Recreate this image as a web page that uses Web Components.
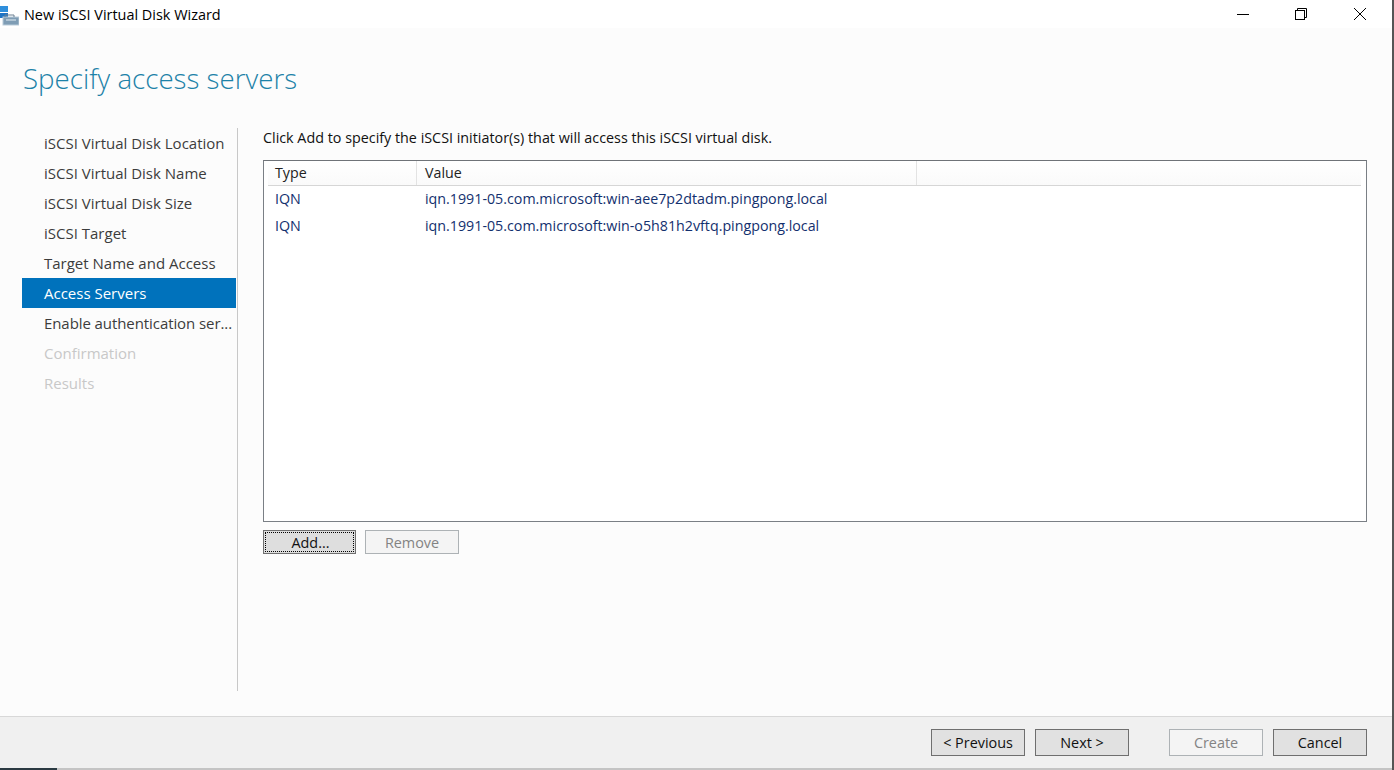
<!DOCTYPE html>
<html>
<head>
<meta charset="utf-8">
<title>New iSCSI Virtual Disk Wizard</title>
<style>
  html, body { margin: 0; height: 100%; overflow: hidden; background: #fcfcfc; }
  body { font-family: "Open Sans", "Liberation Sans", sans-serif; font-size: 14px; }
</style>
</head>
<body>
<wizard-window>
  <wizard-titlebar slot="titlebar">New iSCSI Virtual Disk Wizard</wizard-titlebar>
  <wizard-nav slot="nav"></wizard-nav>
  <server-list slot="main"></server-list>
  <wizard-footer slot="footer"></wizard-footer>
</wizard-window>

<script>
/**
 * Outer frame of the wizard.
 */
customElements.define('wizard-window', class extends HTMLElement {
  constructor () {
    super()
    this.attachShadow({ mode: 'open' }).innerHTML = `
      <style>
        :host { display: flex; flex-direction: column; width: 1394px; height: 770px; box-sizing: border-box; border-right: 2px solid #555; }
        h1 { margin: 0; height: 100px; box-sizing: border-box; padding: 27px 0 0 23px; font-size: 27.7px; line-height: 46px; font-weight: 300; color: #1d82a8; background: #fcfcfc; }
        .body { flex: 1; display: flex; background: #fcfcfc; min-height: 0; }
      </style>
      <slot name="titlebar"></slot>
      <h1>Specify access servers</h1>
      <div class="body">
        <slot name="nav"></slot>
        <slot name="main"></slot>
      </div>
      <slot name="footer"></slot>
    `
  }
})

/**
 * Title bar with app icon and the window controls.
 */
customElements.define('wizard-titlebar', class extends HTMLElement {
  constructor () {
    super()
    this.attachShadow({ mode: 'open' }).innerHTML = `
      <style>
        :host { display: flex; align-items: center; height: 28px; background: #fff; color: #000; font-size: 14.45px; flex: none; padding-right: 3px; }
        .app { width: 19px; height: 24px; margin-right: 5px; flex: none; }
        .title { flex: 1; }
        .ctl { width: 58.5px; height: 28px; display: flex; align-items: center; justify-content: center; }
        .ctl svg { display: block; }
      </style>
      <svg class="app" viewBox="0 0 19 24">
        <rect x="0" y="4" width="8" height="6" fill="#2f8fdc"/>
        <rect x="0" y="11" width="8" height="5" fill="#1f74c4"/>
        <rect x="3" y="15" width="16" height="8" fill="#7f9db5" stroke="#b9cbd9"/>
        <path d="M5 15v-2h9v2" fill="none" stroke="#6b7f90"/>
        <path d="M6 18h10" stroke="#e4edf3"/>
      </svg>
      <span class="title"><slot></slot></span>
      <div class="ctl"><svg width="12" height="12"><path d="M0 6.5h12" stroke="#000"/></svg></div>
      <div class="ctl"><svg width="12" height="12"><rect x=".5" y="2.5" width="9" height="9" fill="none" stroke="#000"/><path d="M2.5 2.5v-2h9v9h-2" fill="none" stroke="#000"/></svg></div>
      <div class="ctl"><svg width="12" height="12"><path d="M0 0l12 12M12 0L0 12" stroke="#000" fill="none"/></svg></div>
    `
  }
})

/**
 * Step list on the left of the wizard.
 */
customElements.define('wizard-nav', class extends HTMLElement {
  constructor () {
    super()
    const steps = [
      ['iSCSI Virtual Disk Location'], ['iSCSI Virtual Disk Name'], ['iSCSI Virtual Disk Size'],
      ['iSCSI Target'], ['Target Name and Access'], ['Access Servers', 'on'],
      ['Enable authentication ser...', 'tight'], ['Confirmation', 'off'], ['Results', 'off']
    ]
    this.attachShadow({ mode: 'open' }).innerHTML = `
      <style>
        :host { display: block; flex: none; width: 215px; height: 563px; margin-left: 22px; border-right: 1px solid #c8c8c8; box-sizing: content-box; }
        div { height: 30px; line-height: 30px; padding-left: 22px; margin-right: 1px; font-size: 15px; color: #3c3c3c; white-space: nowrap; overflow: hidden; }
        div:first-child { margin-top: 1px; }
        .on { background: #0072bc; color: #fff; }
        .off { color: #c8c8c8; }
        .tight { letter-spacing: -.08px; }
      </style>
      ${steps.map(s => `<div class="${s[1] || ''}">${s[0]}</div>`).join('')}
    `
  }
})

/**
 * A grey push button.
 */
customElements.define('wiz-button', class extends HTMLElement {
  constructor () {
    super()
    this.attachShadow({ mode: 'open' }).innerHTML = `
      <style>
        :host { display: flex; align-items: center; justify-content: center; box-sizing: border-box; width: 94px; height: 27px; background: #e1e1e1; border: 1px solid #6f6f6f; color: #111; font-size: 14.4px; position: relative; }
        :host([disabled]) { background: #f4f4f4; border-color: #adb2b5; color: #838383; }
        :host([focused]) { background: #dedede; padding-left: 2px; }
        :host([focused])::after { content: ""; position: absolute; inset: 1px; border: 1px dotted #000; }
      </style>
      <slot></slot>
    `
  }
})

/**
 * Instruction line, the initiator table and the add / remove buttons.
 */
customElements.define('server-list', class extends HTMLElement {
  constructor () {
    super()
    this.attachShadow({ mode: 'open' }).innerHTML = `
      <style>
        :host { display: block; flex: 1; padding: 0 25px; min-width: 0; font-size: 14.25px; }
        p { margin: 0; height: 33px; line-height: 20px; font-size: 14.33px; color: #111; }
        .box { margin-top: -1px; height: 362px; box-sizing: border-box; background: #fff; border: 1px solid #7a7f85; border-top-color: #6f7378; padding: 0 5px 0 4px; }
        .row { display: grid; grid-template-columns: 149px 500px 1fr; }
        .head { height: 25px; line-height: 24px; border-bottom: 1px solid #d6d6d6; color: #222; background: linear-gradient(#fff, #fafafa); box-sizing: border-box; }
        .head span { border-right: 1px solid #e3e3e3; padding-left: 7px; }
        .head span:last-child { border: 0; }
        .rows { margin-top: -1px; }
        .item { height: 27px; line-height: 27px; color: #13306e; }
        .item span { padding-left: 7px; white-space: nowrap; }
        .item span:nth-child(2), .head span:nth-child(2) { padding-left: 8px; }
        .actions { display: flex; gap: 9px; margin-top: 8px; }
        .add { width: 93px; height: 24px; }
        .remove { height: 24px; }
      </style>
      <p>Click Add to specify the iSCSI initiator(s) that will access this iSCSI virtual disk.</p>
      <div class="box">
        <div class="row head"><span>Type</span><span>Value</span><span></span></div>
        <div class="rows">
          <div class="row item"><span>IQN</span><span>iqn.1991-05.com.microsoft:win-aee7p2dtadm.pingpong.local</span></div>
          <div class="row item"><span>IQN</span><span>iqn.1991-05.com.microsoft:win-o5h81h2vftq.pingpong.local</span></div>
        </div>
      </div>
      <div class="actions">
        <wiz-button class="add" focused>Add...</wiz-button>
        <wiz-button class="remove" disabled>Remove</wiz-button>
      </div>
    `
  }
})

/**
 * Footer bar with the wizard navigation buttons.
 */
customElements.define('wizard-footer', class extends HTMLElement {
  constructor () {
    super()
    this.attachShadow({ mode: 'open' }).innerHTML = `
      <style>
        :host { display: flex; flex: none; height: 54px; box-sizing: border-box; background: #f0f0f0; border-top: 1px solid #d8d8d8; padding: 12px 25px 0 0; justify-content: flex-end; gap: 10px; position: relative; }
        .gap { margin-left: 30px; }
        .edge { position: absolute; left: 0; right: 0; bottom: 0; height: 2px; background: linear-gradient(90deg, #2b3a42 57px, #c4c4c4 57px); }
      </style>
      <wiz-button>&lt; Previous</wiz-button>
      <wiz-button>Next &gt;</wiz-button>
      <wiz-button class="gap" disabled>Create</wiz-button>
      <wiz-button>Cancel</wiz-button>
      <div class="edge"></div>
    `
  }
})
</script>
</body>
</html>
